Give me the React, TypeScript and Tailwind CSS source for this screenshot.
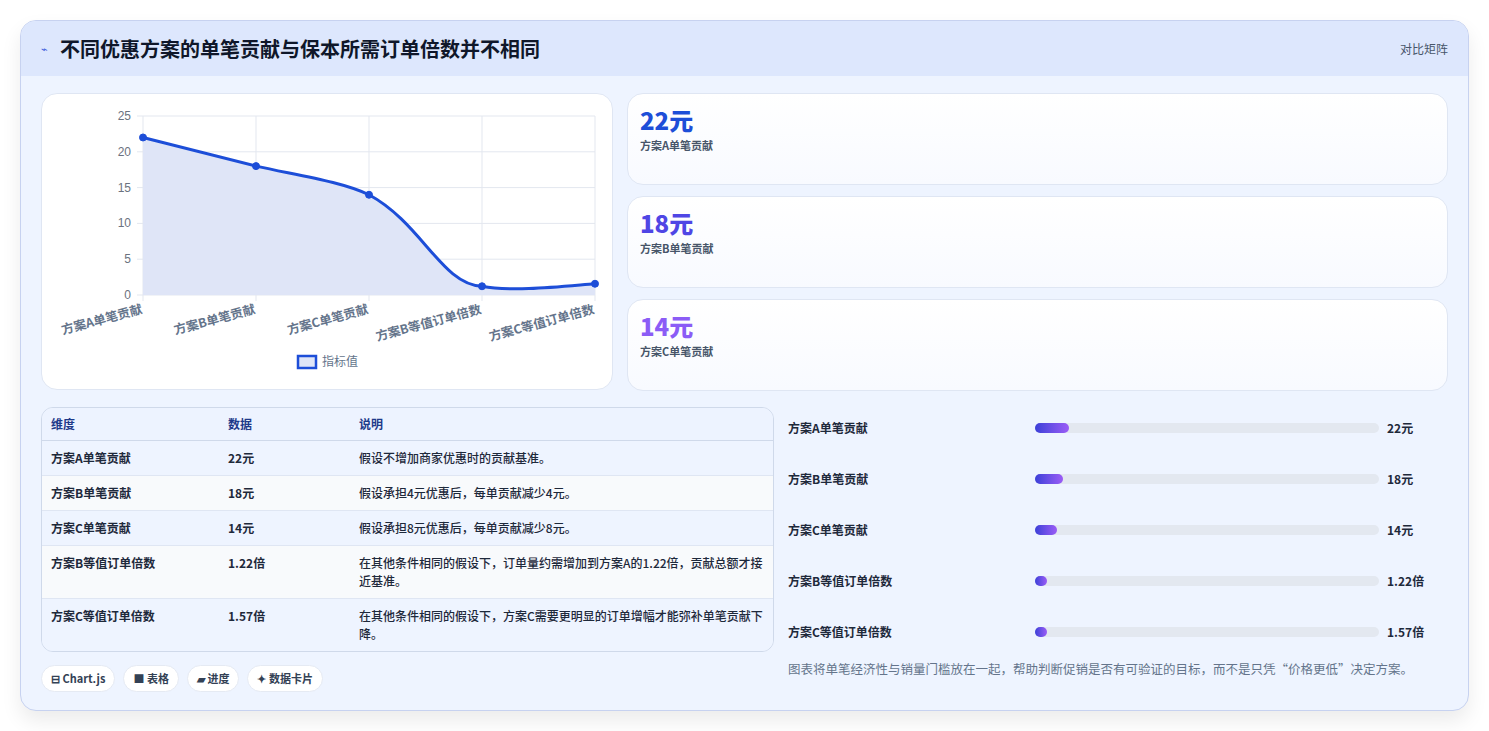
import React from "react";

const F = { fontFamily: '"Noto Sans CJK SC","Noto Sans",sans-serif' };

const stats = [
  { v: "22元", l: "方案A单笔贡献", c: "text-[#1d4ed8]" },
  { v: "18元", l: "方案B单笔贡献", c: "text-[#4f46e5]" },
  { v: "14元", l: "方案C单笔贡献", c: "text-[#8b5cf6]" },
];
const rows = [
  ["方案A单笔贡献", "22元", "假设不增加商家优惠时的贡献基准。"],
  ["方案B单笔贡献", "18元", "假设承担4元优惠后，每单贡献减少4元。"],
  ["方案C单笔贡献", "14元", "假设承担8元优惠后，每单贡献减少8元。"],
  ["方案B等值订单倍数", "1.22倍", "在其他条件相同的假设下，订单量约需增加到方案A的1.22倍，贡献总额才接近基准。"],
  ["方案C等值订单倍数", "1.57倍", "在其他条件相同的假设下，方案C需要更明显的订单增幅才能弥补单笔贡献下降。"],
];
const bars = [
  ["方案A单笔贡献", 34, "22元"],
  ["方案B单笔贡献", 28, "18元"],
  ["方案C单笔贡献", 22, "14元"],
  ["方案B等值订单倍数", 12, "1.22倍"],
  ["方案C等值订单倍数", 12, "1.57倍"],
] as const;

function Chart() {
  const xs = [141, 254, 367, 480, 593];
  const vals = [22, 18, 14, 1.22, 1.57];
  const y = (v: number) => 294 - v * 7.16;
  const pts = xs.map((x, i) => [x, y(vals[i])]);
  const line = `M141,${y(22)} C190,${y(20.3)} 230,${y(18.9)} 254,${y(18)} C300,${y(16.6)} 340,${y(15.8)} 367,${y(14)} C420,${y(10)} 440,${y(1.4)} 480,${y(1.22)} C510,${y(0.4)} 560,${y(1.2)} 593,${y(1.57)}`;
  const labels = ["方案A单笔贡献", "方案B单笔贡献", "方案C单笔贡献", "方案B等值订单倍数", "方案C等值订单倍数"];
  return (
    <svg width="572" height="296" viewBox="40 93 572 296" style={F}>
      {[0, 5, 10, 15, 20, 25].map((t) => (
        <g key={t}>
          <line x1="135" x2="593" y1={y(t)} y2={y(t)} stroke="#e3e7ef" />
          <text x="129" y={y(t) + 4} fontSize="12" fill="#6b7280" textAnchor="end" fontFamily="Liberation Sans">{t}</text>
        </g>
      ))}
      {xs.map((x) => <line key={x} x1={x} x2={x} y1="115" y2="300" stroke="#e3e7ef" />)}
      <path d={`${line} L593,294 L141,294 Z`} fill="#dfe5f7" />
      <path d={line} fill="none" stroke="#1d4ed8" strokeWidth="3" />
      {pts.map(([px, py], i) => <circle key={i} cx={px} cy={py} r="3.5" fill="#1d4ed8" stroke="#1d4ed8" />)}
      {labels.map((l, i) => (
        <text key={l} x={xs[i]} y={312} fontSize="12.5" fontWeight="600" fill="#64748b" textAnchor="end" transform={`rotate(-15 ${xs[i]} 312)`}>{l}</text>
      ))}
      <rect x="296" y="355" width="18" height="12" fill="#dfe5f7" stroke="#1d4ed8" strokeWidth="2.5" />
      <text x="320" y="365" fontSize="12" fill="#64748b">指标值</text>
    </svg>
  );
}

export default function App() {
  return (
    <div className="w-[1489px] h-[731px] bg-white pt-5 pl-5" style={F}>
      <div className="w-[1449px] h-[691px] rounded-2xl border border-[#c7d2f0] bg-[#eef4ff] shadow-[0_10px_20px_rgba(0,0,0,0.08)] overflow-hidden flex flex-col">
        <div className="h-[55px] bg-[#dde7fd] flex items-center justify-between px-5 shrink-0">
          <div className="flex items-center gap-3">
            <span className="text-[#3b5bdb] text-[11px]">⌁</span>
            <span className="text-[20px] font-bold text-[#0f172a]">不同优惠方案的单笔贡献与保本所需订单倍数并不相同</span>
          </div>
          <span className="text-[12px] text-[#475569]">对比矩阵</span>
        </div>
        <div className="px-5 pt-[17px] flex flex-col gap-4">
          <div className="flex gap-[14px]">
            <div className="w-[572px] h-[297px] bg-white rounded-2xl border border-[#dfe6f3] overflow-hidden"><Chart /></div>
            <div className="flex-1 flex flex-col gap-[11px]">
              {stats.map((s) => (
                <div key={s.v} className="h-[92px] rounded-2xl border border-[#dfe6f3] bg-gradient-to-b from-white to-[#f8faff] px-[12px] pt-[9px]">
                  <div className={`text-[24px] font-extrabold leading-[34px] ${s.c}`}>{s.v}</div>
                  <div className="text-[11px] font-semibold text-[#475569]">{s.l}</div>
                </div>
              ))}
            </div>
          </div>
          <div className="flex gap-[14px]">
            <div className="w-[733px] flex flex-col">
              <div className="rounded-xl border border-[#cfd9ea] overflow-hidden text-[12px] text-[#1e293b]">
                <div className="flex h-[33px] items-center bg-[#edf3ff] border-b border-[#cfd9ea] font-semibold text-[#1e3a8a]">
                  <div className="w-[186px] pl-[9px]">维度</div><div className="w-[131px]">数据</div><div>说明</div>
                </div>
                {rows.map((r, i) => (
                  <div key={i} className={`flex py-[8px] border-b border-[#dfe6f3] last:border-b-0 leading-[18px] ${i % 2 ? "bg-[#f8fafc]" : "bg-[#eef4ff]"}`}>
                    <div className="w-[186px] pl-[9px] font-semibold">{r[0]}</div>
                    <div className="w-[131px] font-semibold">{r[1]}</div>
                    <div className="flex-1 pr-1 font-medium">{r[2]}</div>
                  </div>
                ))}
              </div>
              <div className="flex gap-2 mt-[13px]">
                {["⊟ Chart.js", "■ 表格", "▰ 进度", "✦ 数据卡片"].map((p) => (
                  <span key={p} className="h-[27px] px-[9px] rounded-full bg-white border border-[#e5eaf3] text-[11px] font-semibold text-[#334155] flex items-center">{p}</span>
                ))}
              </div>
            </div>
            <div className="flex-1 flex flex-col -mt-[5px]">
              {bars.map(([l, w, v]) => (
                <div key={l} className="h-[51px] flex items-center text-[12px] font-semibold text-[#1e293b]">
                  <div className="w-[247px]">{l}</div>
                  <div className="w-[344px] h-[10px] rounded-full bg-[#e3e8f0]">
                    <div className="h-full rounded-full bg-gradient-to-r from-[#3b3fd8] to-[#9b5cf6]" style={{ width: w }} />
                  </div>
                  <div className="ml-2">{v}</div>
                </div>
              ))}
              <div className="mt-[3px] text-[12.5px] text-[#64748b]">图表将单笔经济性与销量门槛放在一起，帮助判断促销是否有可验证的目标，而不是只凭“价格更低”决定方案。</div>
            </div>
          </div>
        </div>
      </div>
    </div>
  );
}
